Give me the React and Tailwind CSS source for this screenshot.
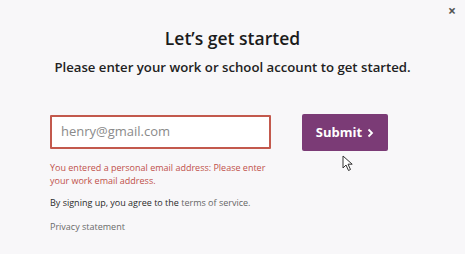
export default function App() {
  return (
    <div className="relative w-[465px] h-[254px] bg-[#f8f7f9] overflow-hidden" style={{ fontFamily: '"Open Sans", "Noto Sans", sans-serif' }}>
      <button className="absolute right-[9px] top-[4px] text-[#555] text-[14px] leading-none font-bold">×</button>
      <div className="flex flex-col items-center pt-[26px]">
        <h1 className="text-[17.5px] font-semibold text-[#1b1b1b] leading-[24px]">Let’s get started</h1>
        <p className="mt-[8px] text-[13.2px] font-semibold text-[#222] leading-[18px]">Please enter your work or school account to get started.</p>
      </div>
      <div className="pl-[50px] pt-[39px] flex gap-[31px] items-start">
        <div className="w-[221px]">
          <div className="h-[34px] border-2 border-[#c3594d] bg-white rounded-[1px] flex items-center pl-[9px]">
            <span className="text-[13px] text-[#8a8a8a]">henry@gmail.com</span>
          </div>
          <p className="mt-[12px] w-[228px] text-[9px] leading-[13px] text-[#c0504a]">You entered a personal email address: Please enter your work email address.</p>
        </div>
        <div className="relative">
          <button className="w-[86px] h-[37px] -mt-[1px] bg-[#7b3b76] rounded-[2px] text-white text-[13px] font-bold flex items-center justify-center gap-[5px]">
            Submit
            <svg width="7" height="10" viewBox="0 0 7 10"><path d="M1.5 1.5 L5 5 L1.5 8.5" stroke="white" strokeWidth="1.8" fill="none" /></svg>
          </button>
          <svg className="absolute left-[40px] top-[40px]" width="12" height="17" viewBox="0 0 12 17">
            <path d="M1 1 L1 13 L4 10 L6.5 15.5 L8.5 14.5 L6 9.2 L10.2 9.2 Z" fill="white" stroke="#333" strokeWidth="1" strokeLinejoin="round" />
          </svg>
        </div>
      </div>
      <div className="pl-[50px] mt-[9px] text-[9px] leading-[13px]">
        <p className="text-[#2a2a2a]">By signing up, you agree to the <span className="text-[#666]">terms of service.</span></p>
        <p className="mt-[11px] text-[#6a6a6a]">Privacy statement</p>
      </div>
    </div>
  );
}
